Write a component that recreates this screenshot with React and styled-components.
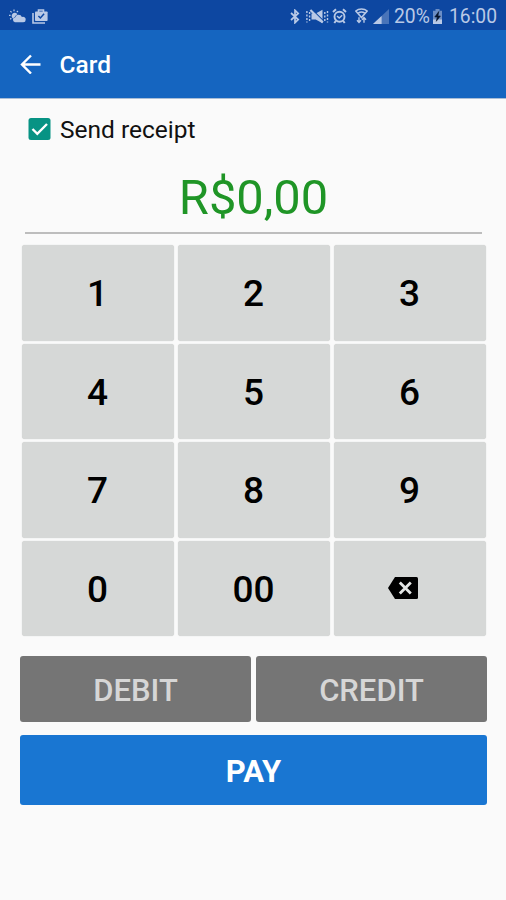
import React from 'react';
import styled, { createGlobalStyle } from 'styled-components';

const GlobalStyle = createGlobalStyle`
  * {
    box-sizing: border-box;
  }
  body {
    margin: 0;
    background: #fafafa;
    font-family: Roboto, "Noto Sans", sans-serif;
  }
  button {
    border: 0;
    padding: 0;
    font-family: inherit;
  }
`;

const Screen = styled.div`
  width: 506px;
  height: 900px;
  overflow: hidden;
  background: #fafafa;
`;

const StatusBar = styled.div`
  display: flex;
  align-items: center;
  justify-content: space-between;
  height: 30px;
  padding: 2px 10px 0 9px;
  background: #0d47a1;
  color: #b9c9e6;
`;

const StatusGroup = styled.div`
  display: flex;
  align-items: center;
  height: 28px;
`;

const StatusIcon = styled.svg`
  display: block;
  flex: none;
  margin-left: ${props => props.$gap || 0}px;
`;

const StatusText = styled.span`
  margin-left: ${props => props.$gap}px;
  width: ${props => props.$width}px;
  padding-top: 2px;
  font-size: 19.3px;
  line-height: 26px;
  white-space: nowrap;
`;

const AppBar = styled.header`
  display: flex;
  align-items: center;
  height: 69px;
  padding-left: 20px;
  background: #1565c0;
  border-bottom: 1px solid #a9bdd6;
`;

const BackArrow = styled.svg`
  display: block;
  width: 21px;
  height: 20px;
`;

const Title = styled.h1`
  margin: 2px 0 0 18.5px;
  color: #fff;
  font-size: 24.5px;
  font-weight: 500;
  line-height: 32px;
`;

const Receipt = styled.label`
  display: flex;
  align-items: center;
  height: 61px;
  padding-left: 28px;
  color: #111;
  font-size: 24.5px;
`;

const CheckBox = styled.svg`
  display: block;
  width: 23px;
  height: 23px;
  margin-right: 9px;
`;

const Amount = styled.div`
  height: 74px;
  margin: 0 24px 0 25px;
  border-bottom: 2px solid #bdbdbd;
  color: #1f9526;
  font-size: 48.8px;
  line-height: 76px;
  text-align: center;
`;

const Keypad = styled.div`
  display: grid;
  grid-template-columns: repeat(3, 1fr);
  grid-template-rows: repeat(4, 1fr);
  gap: 3px 4px;
  height: 391px;
  margin: 11px 20px 0 22px;
`;

const Key = styled.button`
  display: flex;
  align-items: center;
  justify-content: center;
  padding: 2px 1px 0 0;
  border-radius: 3px;
  background: #d6d8d7;
  color: #000;
  font-size: 37px;
  font-weight: 500;
  box-shadow: 0 0 1px #c4c6c5;
`;

const EraseIcon = styled.svg`
  display: block;
  width: 30px;
  height: 22px;
  margin: -2px 14px 0 0;
`;

const Actions = styled.div`
  display: grid;
  grid-template-columns: 1fr 1fr;
  gap: 13px 5px;
  margin: 20px 19px 0 20px;
`;

const Method = styled.button`
  height: 66px;
  padding-top: 2px;
  border-radius: 3px;
  background: #757575;
  color: #d6d6d6;
  font-size: 31px;
  font-weight: 500;
`;

const Pay = styled.button`
  grid-column: 1 / 3;
  height: 70px;
  padding-top: 2px;
  border-radius: 3px;
  background: #1976d2;
  color: #fff;
  font-size: 31px;
  font-weight: 700;
`;

const digits = ['1', '2', '3', '4', '5', '6', '7', '8', '9', '0', '00'];

const Notifications = () => (
  <StatusGroup>
    <StatusIcon width="17" height="14" viewBox="0 0 17 14" fill="currentColor">
      <path d="M4.3 9.8a3.2 3.2 0 1 1 4.2-4.6A4.3 4.3 0 0 0 6 7.8a3.5 3.5 0 0 0-1.7 2z" />
      <path d="M5 .6v1.7M1.4 2.1l1.2 1.2M9 2L7.8 3.2M0 6.3h1.6M1.2 10.3l1.1-1" stroke="currentColor" strokeWidth="1.2" />
      <path d="M5.9 13.3a2.6 2.6 0 0 1 .4-5.1 3.5 3.5 0 0 1 6.6-.1 2.6 2.6 0 0 1 3.8 2.6 2.6 2.6 0 0 1-2.5 2.6z" />
    </StatusIcon>
    <StatusIcon $gap={6} width="16" height="15" viewBox="0 0 16 15" fill="none">
      <path d="M1 4v10h12" stroke="currentColor" strokeWidth="1.6" />
      <path d="M6.5 3V1h5V3" stroke="currentColor" strokeWidth="1.6" />
      <rect x="3" y="2.5" width="12.6" height="9.5" rx=".8" fill="currentColor" />
      <path d="M6.4 7l2 2 3.7-4.2" stroke="#0d47a1" strokeWidth="1.5" />
    </StatusIcon>
  </StatusGroup>
);

const SystemIcons = () => (
  <StatusGroup>
    <StatusIcon width="10" height="15" viewBox="0 0 10 15" fill="none" stroke="currentColor" strokeWidth="1.7">
      <path d="M1 4l7.2 6.6L5 13.7V1.3l3.2 3.1L1 11" />
    </StatusIcon>
    <StatusIcon $gap={6} width="23" height="15" viewBox="0 0 23 15" fill="none" stroke="currentColor">
      <path d="M5.5 4.5h4.2L16.5 .8v13.4L9.7 10.5H5.5z" fill="currentColor" stroke="none" />
      <path d="M6 .5l12 12" stroke="#0d47a1" strokeWidth="1.2" />
      <path d="M4.4 1l12.4 12.4" strokeWidth="2.2" />
      <path d="M3.6 3v9.5M.9 2v11.5M18.8 3v9.5M21.5 2v11.5" strokeWidth="1.4" strokeDasharray="2 1.5" />
    </StatusIcon>
    <StatusIcon $gap={3} width="15" height="16" viewBox="0 0 15 16" fill="none" stroke="currentColor">
      <circle cx="7.5" cy="8.7" r="5" strokeWidth="1.9" />
      <path d="M1 4l3-2.7M14 4l-3-2.7M3.8 13l-1.5 2M11.2 13l1.5 2" strokeWidth="2" />
      <path d="M5 8l2.2 2 3-2.7" strokeWidth="1.5" />
    </StatusIcon>
    <StatusIcon $gap={8} width="13" height="16" viewBox="0 0 13 16" fill="none" stroke="currentColor">
      <path d="M.8 3C3.8.4 9.2.4 12.2 3L6.5 9.5z" strokeWidth="1.6" />
      <path d="M3.2 5.2c1.9-1.4 4.7-1.4 6.6 0" strokeWidth="1.6" />
      <path d="M4 9.3v5M2 12.2l2 2.2 2-2.2M9 14.8V9.5M7 11.7l2-2.2 2 2.2" strokeWidth="1.4" />
    </StatusIcon>
    <StatusIcon $gap={5} width="16" height="15" viewBox="0 0 16 15" fill="currentColor">
      <path d="M16 0v15H0z" opacity=".35" />
      <path d="M8.6 7v8H0z" />
    </StatusIcon>
    <StatusText $gap={5} $width={35}>20%</StatusText>
    <StatusIcon $gap={3} width="11" height="15" viewBox="0 0 11 15">
      <path d="M3.5 0h4v1.8H10V15H1V1.8h2.5z" fill="currentColor" opacity=".55" />
      <path d="M1 10.5h9V15H1z" fill="currentColor" />
      <path d="M6.8 2.5L2.8 8h2.5l-1 4.3L8.4 7H5.9z" fill="#06152d" stroke="#06152d" strokeWidth=".6" />
    </StatusIcon>
    <StatusText $gap={6} $width={47}>16:00</StatusText>
  </StatusGroup>
);

const App = () => (
  <Screen>
    <GlobalStyle />
    <StatusBar>
      <Notifications />
      <SystemIcons />
    </StatusBar>
    <AppBar>
      <BackArrow viewBox="0 0 21 20" fill="none" stroke="#fff" strokeWidth="2.4">
        <path d="M20.5 10.5H2.2M11 1.5L2 10.5l9 9" />
      </BackArrow>
      <Title>Card</Title>
    </AppBar>
    <Receipt>
      <CheckBox viewBox="0 0 23 23">
        <rect x=".5" y="0" width="22" height="22" rx="2.5" fill="#079384" />
        <path d="M4.5 11l4.8 4.8L19 6" fill="none" stroke="#fff" strokeWidth="2.4" />
      </CheckBox>
      Send receipt
    </Receipt>
    <Amount>R$0,00</Amount>
    <Keypad>
      {digits.map(digit => <Key key={digit}>{digit}</Key>)}
      <Key aria-label="Erase">
        <EraseIcon viewBox="0 0 30 22">
          <path d="M7 0h21.5q1.5 0 1.5 1.5v19q0 1.5-1.5 1.5H7L0 11z" fill="#000" />
          <path d="M11.8 5.5l11 11M22.8 5.5l-11 11" stroke="#e4e6e5" strokeWidth="2.8" />
        </EraseIcon>
      </Key>
    </Keypad>
    <Actions>
      <Method>DEBIT</Method>
      <Method>CREDIT</Method>
      <Pay>PAY</Pay>
    </Actions>
  </Screen>
);

export default App;
